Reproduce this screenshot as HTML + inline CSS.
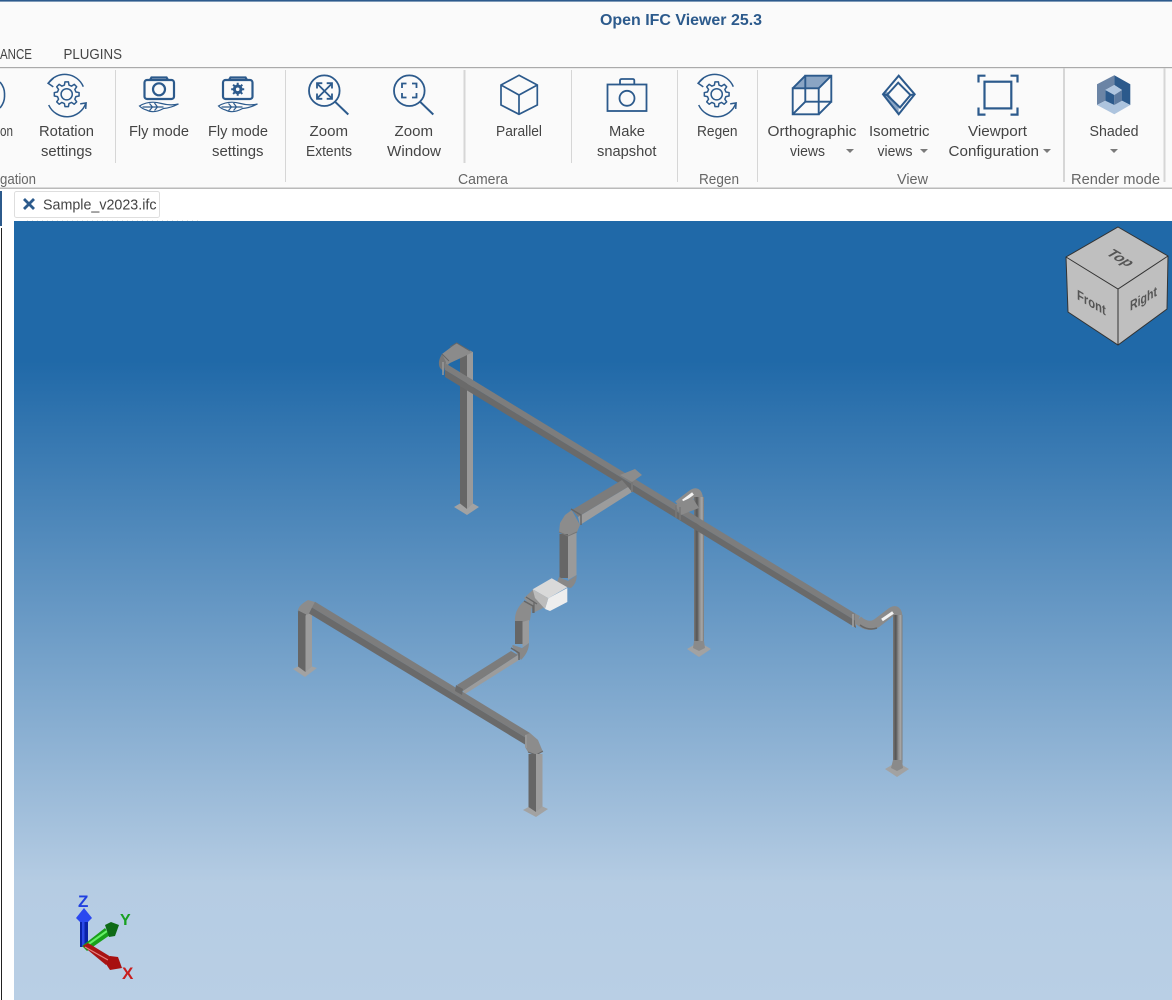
<!DOCTYPE html>
<html><head><meta charset="utf-8"><title>Open IFC Viewer 25.3</title>
<style>
html,body{margin:0;padding:0;width:1172px;height:1000px;overflow:hidden;background:#fff}
svg{display:block;font-family:"Liberation Sans",sans-serif}
.t{font-size:15px;fill:#444}
.g{font-size:15px;fill:#666}
.i{fill:none;stroke:#2c5a8c}
</style></head><body>
<svg width="1172" height="1000" viewBox="0 0 1172 1000" xmlns="http://www.w3.org/2000/svg">
<defs>
<linearGradient id="bg" x1="0" y1="0" x2="0" y2="1">
<stop offset="0" stop-color="#2069a8"/><stop offset=".18" stop-color="#2069a8"/><stop offset=".85" stop-color="#b5cce3"/><stop offset="1" stop-color="#b9cfe5"/>
</linearGradient>
<linearGradient id="pipeV" x1="0" y1="0" x2="1" y2="0">
<stop offset="0" stop-color="#777"/><stop offset=".3" stop-color="#555"/><stop offset=".55" stop-color="#8a8a8a"/><stop offset=".8" stop-color="#a8a8a8"/><stop offset="1" stop-color="#777"/>
</linearGradient>
<path id="gear" fill="none" stroke="#2c5a8c" stroke-width="1.5" stroke-linejoin="round" d="M9.22,-2.3L12.38,-1.74L12.38,1.74L9.22,2.3L8.14,4.89L9.98,7.52L7.52,9.98L4.89,8.14L2.3,9.22L1.74,12.38L-1.74,12.38L-2.3,9.22L-4.89,8.14L-7.52,9.98L-9.98,7.52L-8.14,4.89L-9.22,2.3L-12.38,1.74L-12.38,-1.74L-9.22,-2.3L-8.14,-4.89L-9.98,-7.52L-7.52,-9.98L-4.89,-8.14L-2.3,-9.22L-1.74,-12.38L1.74,-12.38L2.3,-9.22L4.89,-8.14L7.52,-9.98L9.98,-7.52L8.14,-4.89Z"/>
<g id="rot" fill="none" stroke="#2c5a8c" stroke-width="1.5">
<use href="#gear"/><circle r="5.6"/>
<path d="M-18.5,-11 A20,20 0 0 1 16.6,-7.6"/>
<path d="M-13.2,-16.2 L-18.6,-11 L-13.4,-7.4"/>
<path d="M-18,10.7 A20,20 0 0 0 19.2,8.7"/>
<path d="M13.5,9.6 L19.4,8.6 L19,14.6"/>
</g>
<g id="feather" fill="none" stroke="#2c5a8c" stroke-width="1.2">
<path d="M0,2.5 Q10,-3.5 22,0 Q31,2.5 39,0.5 Q31,4.5 24,5 Q14,10.5 7,6.5 Q3,5.5 0,2.5Z"/>
<path d="M3,3.5 L24,3.5 M10,0 L13,3.5 M15,-0.5 L18,3.5 M10,7 L13,3.5 M15,7 L18,3.5"/>
</g>
<g id="tri"><path d="M-4,-2 L4,-2 L0,2Z" fill="#7a7a7a"/></g>
</defs>

<rect width="1172" height="1000" fill="#fff"/>
<rect width="1172" height="188" fill="#fafafa"/>
<rect width="1172" height="1.6" fill="#2c5a8c"/>
<rect y="67" width="1172" height="1.2" fill="#aaa"/>
<rect y="187.6" width="1172" height="1.2" fill="#aaa"/>

<text x="600" y="25" font-size="16" font-weight="bold" fill="#2c5a8c" textLength="162" lengthAdjust="spacingAndGlyphs">Open IFC Viewer 25.3</text>
<text x="0" y="59" class="t" textLength="32" lengthAdjust="spacingAndGlyphs">ANCE</text>
<text x="63.500" y="59" class="t" textLength="58.500" lengthAdjust="spacingAndGlyphs">PLUGINS</text>

<!-- separators -->
<g fill="#d6d6d6">
<rect x="115" y="70" width="1" height="93"/>
<rect x="285" y="70" width="1" height="112"/>
<rect x="463.500" y="70" width="2" height="93"/>
<rect x="571" y="70" width="1" height="93"/>
<rect x="677" y="70" width="1" height="112"/>
<rect x="757" y="70" width="1" height="112"/>
<rect x="1063" y="68" width="2" height="114"/>
<rect x="1163.500" y="68" width="2" height="114"/>
</g>

<!-- labels -->
<g class="t">
<text class="t" x="0" y="136" textLength="13" lengthAdjust="spacingAndGlyphs">on</text>
<text class="t" x="39" y="136" textLength="55" lengthAdjust="spacingAndGlyphs">Rotation</text>
<text class="t" x="41" y="156" textLength="51" lengthAdjust="spacingAndGlyphs">settings</text>
<text class="t" x="129" y="136" textLength="60" lengthAdjust="spacingAndGlyphs">Fly mode</text>
<text class="t" x="208" y="136" textLength="60" lengthAdjust="spacingAndGlyphs">Fly mode</text>
<text class="t" x="212" y="156" textLength="51.500" lengthAdjust="spacingAndGlyphs">settings</text>
<text class="t" x="309.500" y="136" textLength="38.500" lengthAdjust="spacingAndGlyphs">Zoom</text>
<text class="t" x="306" y="156" textLength="46" lengthAdjust="spacingAndGlyphs">Extents</text>
<text class="t" x="394.500" y="136" textLength="38.500" lengthAdjust="spacingAndGlyphs">Zoom</text>
<text class="t" x="387" y="156" textLength="54" lengthAdjust="spacingAndGlyphs">Window</text>
<text class="t" x="496" y="136" textLength="46" lengthAdjust="spacingAndGlyphs">Parallel</text>
<text class="t" x="609" y="136" textLength="36" lengthAdjust="spacingAndGlyphs">Make</text>
<text class="t" x="597" y="156" textLength="59.500" lengthAdjust="spacingAndGlyphs">snapshot</text>
<text class="t" x="697" y="136" textLength="40.500" lengthAdjust="spacingAndGlyphs">Regen</text>
<text class="t" x="767.500" y="136" textLength="89" lengthAdjust="spacingAndGlyphs">Orthographic</text>
<text class="t" x="790" y="156" textLength="35" lengthAdjust="spacingAndGlyphs">views</text>
<text class="t" x="869" y="136" textLength="60.500" lengthAdjust="spacingAndGlyphs">Isometric</text>
<text class="t" x="877.500" y="156" textLength="35" lengthAdjust="spacingAndGlyphs">views</text>
<text class="t" x="968" y="136" textLength="59" lengthAdjust="spacingAndGlyphs">Viewport</text>
<text class="t" x="948.500" y="156" textLength="90.500" lengthAdjust="spacingAndGlyphs">Configuration</text>
<text class="t" x="1089.500" y="136" textLength="49" lengthAdjust="spacingAndGlyphs">Shaded</text>
<text class="g" x="0" y="184" textLength="36" lengthAdjust="spacingAndGlyphs">gation</text>
<text class="g" x="458" y="184" textLength="50" lengthAdjust="spacingAndGlyphs">Camera</text>
<text class="g" x="699" y="184" textLength="40" lengthAdjust="spacingAndGlyphs">Regen</text>
<text class="g" x="897" y="184" textLength="31" lengthAdjust="spacingAndGlyphs">View</text>
<text class="g" x="1071" y="184" textLength="89" lengthAdjust="spacingAndGlyphs">Render mode</text>
</g>
<use href="#tri" x="850" y="151"/><use href="#tri" x="924" y="151"/><use href="#tri" x="1047" y="151"/><use href="#tri" x="1114" y="151"/>

<!-- icons -->
<path class="i" stroke-width="1.6" d="M0,82 Q5,88 4.500,95 Q5,102 0,108"/>
<use href="#rot" x="66.700" y="94.300"/>
<use href="#rot" x="716.700" y="94.300"/>

<!-- fly mode -->
<g class="i" stroke-width="2.200">
<rect x="144.500" y="80" width="29.500" height="19" rx="2.500"/>
<path d="M150,80 L151.500,77.500 L166.500,77.500 L168,80"/>
<circle cx="159" cy="89.300" r="6"/>
<rect x="223" y="80" width="29.500" height="19" rx="2.500"/>
<path d="M229,80 L230.500,77.500 L245.500,77.500 L247,80"/>
</g>
<use href="#feather" x="139.500" y="103.500"/>
<use href="#feather" x="218.500" y="103.500"/>
<g transform="translate(237.700,89.300)">
<circle r="4.800" fill="#2c5a8c"/>
<path d="M0,-6.500V6.500M-6.500,0H6.500M-4.600,-4.600L4.600,4.600M-4.600,4.600L4.600,-4.600" stroke="#2c5a8c" stroke-width="2"/>
<circle r="1.800" fill="#fafafa"/>
</g>

<!-- zoom extents -->
<g class="i" stroke-width="1.800">
<circle cx="324.300" cy="90.700" r="15.300"/>
<path d="M335,101.700 L348.300,114.500" stroke-width="2"/>
<path d="M317.500,84 L331.500,98 M331.500,84 L317.500,98"/>
<path d="M317,88.500V83.200H322.300M332,88.500V83.200H326.700M317,93.500V98.800H322.300M332,93.500V98.800H326.700"/>
</g>
<!-- zoom window -->
<g class="i" stroke-width="1.800">
<circle cx="409.300" cy="90.700" r="15.300"/>
<path d="M420,101.700 L433.300,114.500" stroke-width="2"/>
<path d="M402,88V83.500H406.500M412,83.500H416.500V88M416.500,93V97.500H412M406.500,97.500H402V93"/>
</g>
<!-- parallel -->
<path class="i" stroke-width="1.700" d="M519,75.300 L537.300,85 V105 L519,114.300 L501,105 V85Z M501,85 L519,95 L537.300,85 M519,95V114.300"/>
<!-- snapshot -->
<g class="i" stroke-width="1.800">
<rect x="607.500" y="84.500" width="39" height="26.500"/>
<path d="M620,84.500V80.500Q620,79 622,79H632.500Q634.300,79 634.300,80.500V84.500"/>
<circle cx="627" cy="98.300" r="7.500"/>
</g>
<!-- ortho -->
<path d="M792.700,88.300 L805.300,75.700 H831.300 L818.700,88.300Z" fill="#8aa5c4"/>
<g class="i" stroke-width="1.900">
<rect x="792.700" y="88.300" width="26" height="26"/>
<rect x="805.300" y="75.700" width="26" height="26"/>
<path d="M792.700,88.300 L805.300,75.700 M818.700,88.300 L831.300,75.700 M792.700,114.300 L805.300,101.700 M818.700,114.300 L831.300,101.700"/>
</g>
<!-- iso -->
<path d="M883,94.300 L898.700,114.300 V107.500 L887,91.500Z" fill="#8aa5c4"/>
<g class="i" stroke-width="2">
<path d="M898.700,75.700 L914.700,94.300 L898.700,114.300 L883,94.300Z"/>
<path d="M898.200,82.700 L910.500,95 L900,107.500 L887,95Z"/>
<path d="M883,94.300 L887,95 M914.700,94.300 L910.500,95"/>
</g>
<!-- viewport -->
<g class="i" stroke-width="2.200">
<rect x="984.500" y="81.700" width="26.800" height="26.700"/>
<path d="M978.500,82.500V75.700H985.500M1010.500,75.700H1017.500V82.500M1017.500,107.500V114.600H1010.500M985.500,114.600H978.500V107.500"/>
</g>
<!-- shaded -->
<path d="M1097,84.300 L1114.300,75.300 V85 L1105.300,90 V100.700 L1097,105Z" fill="#6b84a5"/>
<path d="M1114.300,75.300 L1130.300,84.300 V105 L1122,100.700 V90 L1114.300,85Z" fill="#2c5a8c"/>
<path d="M1097,105 L1105.300,100.700 L1114.300,105 L1122,100.700 L1130.300,105 L1114.300,114.300Z" fill="#adc4de"/>
<path d="M1105.300,90 L1114.300,85 L1122,90 L1114.300,95Z" fill="#b0c6e0"/>
<path d="M1105.300,90 L1114.300,95 V105 L1105.300,100.700Z" fill="#2c5a8c"/>
<path d="M1114.300,95 L1122,90 V100.700 L1114.300,105Z" fill="#5c7aa0"/>

<!-- tab strip -->
<rect x="0" y="191" width="2" height="35" fill="#2c5a8c"/>
<rect x="1" y="228" width="1" height="772" fill="#222"/>
<rect x="14.500" y="191.500" width="145" height="26" rx="2" fill="#fff" stroke="#dedede"/>
<path d="M24,199 L34,209 M34,199 L24,209" stroke="#2c5a8c" stroke-width="2.800" fill="none"/>
<text class="t" x="43" y="209.500" textLength="113.500" lengthAdjust="spacingAndGlyphs">Sample_v2023.ifc</text>
<path d="M27,220.500 H200" stroke="#e2e2e2" stroke-dasharray="1 4"/>

<!-- viewport -->
<rect x="14" y="221" width="1158" height="779" fill="url(#bg)"/>

<!-- post 1 -->
<path d="M460,352 H467 V510 L460,505Z" fill="#666"/>
<path d="M467,352 H473 V505 L467,510Z" fill="#9a9a9a"/>
<path d="M454,507 L460,503.500 L467,509 L473,503.500 L479,507 L467,515Z" fill="#a2a2a2"/>

<!-- post right 1 -->
<path d="M678,505 L691,495 Q698,489 698.500,499" fill="none" stroke="#8c8c8c" stroke-width="9"/>
<path d="M683,501 L693,493.500" stroke="#f4f4f4" stroke-width="3" fill="none"/>
<rect x="694" y="497" width="10" height="146" fill="url(#pipeV)"/>
<path d="M687,649 L699,642 L711,649 L699,657Z" fill="#a2a2a2"/>
<path d="M693,648 L699,651 L705,648 L704,641 H694Z" fill="#8a8a8a"/>

<!-- post right 2 -->
<path d="M858,620 Q868,629 877,623 L890,613 Q897,607 898,616" fill="none" stroke="#8a8a8a" stroke-width="9"/>
<path d="M860,625 Q868,631 877,628" fill="none" stroke="#666" stroke-width="1.500"/>
<path d="M882,620 L893,612.500" stroke="#f4f4f4" stroke-width="3" fill="none"/>
<rect x="893" y="615" width="9.500" height="148" fill="url(#pipeV)"/>
<path d="M885,769 L897,762 L909,769 L897,777Z" fill="#a2a2a2"/>
<path d="M891,768 L897,771 L903,768 L902,760 H893Z" fill="#8a8a8a"/>

<!-- top left elbow -->
<path d="M442,354 L456.700,343 L473,352 L463,357 L450,363 L443,369Z" fill="#8b8b8b"/>
<path d="M442,354 Q437,362 440,368 L444,372 L446,362Z" fill="#777"/>
<path d="M450,347 L456.700,343 L470,351" stroke="#666" fill="none"/>
<path d="M442,354 L449,361" stroke="#666" fill="none"/>

<!-- main duct 1 -->
<path d="M445,363 L856,614 V621 L445,370Z" fill="#7d7d7d"/>
<path d="M445,370 L856,621 V628 L445,377Z" fill="#6a6a6a"/>
<path d="M443,362 V375" stroke="#999" stroke-width="1.500"/>
<path d="M855,613.500 L860,616 L855,627Z" fill="#8a8a8a"/>
<path d="M853,614 V627" stroke="#a5a5a5" stroke-width="1.500"/>
<!-- flange near post1 -->
<path d="M675,505 L692,497 L699,508 L681,515Z" fill="#8a8a8a"/>
<path d="M676,505 V518 M680,507 V520" stroke="#777" stroke-width="1.500"/>

<!-- tee + branch -->
<path d="M572,510 L622,480 L628,487 L578,517Z" fill="#7c7c7c"/>
<path d="M578,517 L628,487 L632,492 L580,525Z" fill="#9c9c9c"/>
<path d="M620,475 L635,469 L642,475 L632,482Z" fill="#8c8c8c"/>
<path d="M632,482 V492" stroke="#777" stroke-width="2"/>
<!-- elbow 1 + vertical duct -->
<path d="M571.700,510 L565,515 L560,523 L559,532 L568,535.700 L577,532 L580,525Z" fill="#8c8c8c"/>
<path d="M571,509 L581,515 V525" stroke="#666" stroke-width="1.500" fill="none"/>
<rect x="559.500" y="534" width="8.500" height="44" fill="#666"/>
<path d="M568,535 L576.500,532 V575 L568,580Z" fill="#9a9a9a"/>
<path d="M559,532 L568,536 L577,532" stroke="#777" fill="none"/>
<path d="M559,577 L568,581 L576.700,575 Q577,583 571,588 L556,585Z" fill="#888"/>

<!-- filter box -->
<path d="M532.700,590 L524,598 L535,612 L545,607 V596Z" fill="#8f8f8f"/>
<path d="M526,597 L534,602 V613 M529,599 L537,604" stroke="#666" stroke-width="1.200" fill="none"/>
<path d="M532.700,589.300 L551.700,578.300 L567.300,587.300 L548.300,598.300Z" fill="#d9d9d9"/>
<path d="M548.300,598.300 L567.300,588 V602 L550,611 L545,609Z" fill="#eeeeee"/>
<path d="M532.700,589.300 L548.300,598.300 L545,609 L535,598Z" fill="#bcbcbc"/>

<!-- elbow 2 + vertical -->
<path d="M524,601 L532,606 L530,620 L528,622 L515,622 Q514,610 524,601Z" fill="#8c8c8c"/>
<path d="M524,601 L533,606 V613" stroke="#666" stroke-width="1.500" fill="none"/>
<rect x="515" y="621" width="7.500" height="23" fill="#666"/>
<path d="M522.500,622 L529,620 V643 L522.500,647Z" fill="#9a9a9a"/>
<path d="M513,645 L522,648 L529,643 Q529,652 521,660 L512,646Z" fill="#888"/>

<!-- branch 2 -->
<path d="M457,685 L511,651 L518,655 L463,691Z" fill="#7c7c7c"/>
<path d="M463,691 L518,655 L519,660 L465,694Z" fill="#9c9c9c"/>
<path d="M511,648 L519,653 V660" stroke="#666" stroke-width="1.500" fill="none"/>

<!-- main duct 2 -->
<path d="M298,612 H305.500 V673 L298,669Z" fill="#666"/>
<path d="M305.500,612 H312 V669 L305.500,673Z" fill="#9c9c9c"/>
<path d="M293,669 L298,666.500 L305.500,672 L312,666.500 L317,668 L305,677Z" fill="#a2a2a2"/>
<path d="M298,610 Q299,605 308,600 L315,602 L309,614 L305,615Z" fill="#8c8c8c"/>
<path d="M298,611 L306,615" stroke="#666"/>
<path d="M315,601.700 L530,733 L528,739 L312,607.500Z" fill="#7d7d7d"/>
<path d="M312,607.500 L528,739 L525,744.500 L309,613.500Z" fill="#6a6a6a"/>
<path d="M456,685 L463,689 L462,695 L455,691Z" fill="#6a6a6a"/>

<!-- elbow bottom right -->
<path d="M525,735 L530,733 L538,740 L543,752 L537,755 L528,752 L525,747Z" fill="#8c8c8c"/>
<path d="M526,735 V748" stroke="#999" stroke-width="1.500"/>
<path d="M528,752 L536,755 L543,751" stroke="#666" fill="none"/>
<path d="M528.500,754 H536 V813 L528.500,808Z" fill="#666"/>
<path d="M536,754 H542.500 V808 L536,813Z" fill="#9c9c9c"/>
<path d="M523,810 L528.500,807 L536,812 L542.500,806.500 L548,809 L536,817Z" fill="#a2a2a2"/>

<!-- nav cube -->
<path d="M1118,227 L1168,256 L1167,309 L1118,345 L1068,312 L1066,257Z" fill="#bfbfbf" stroke="#333" stroke-width="1"/>
<path d="M1066,257 L1118,289 L1168,256 M1118,289 V345" fill="none" stroke="#333" stroke-width="1"/>
<text transform="matrix(.87 .5 -.87 .5 1105 254)" font-size="15" font-weight="bold" fill="#555" textLength="26" lengthAdjust="spacingAndGlyphs">Top</text>
<text transform="matrix(.87 .5 0 1 1077 299)" font-size="14" font-weight="bold" fill="#555" textLength="33" lengthAdjust="spacingAndGlyphs">Front</text>
<text transform="matrix(.87 -.5 0 1 1130 311)" font-size="14" font-weight="bold" fill="#555" textLength="31" lengthAdjust="spacingAndGlyphs">Right</text>

<!-- axes -->
<rect x="80" y="920" width="8" height="27" fill="#0a22a8"/>
<rect x="82" y="920" width="2.500" height="27" fill="#2a48e6"/>
<path d="M84,908 L92,918 L88,922 H80 L76,918Z" fill="#2a48f0"/>
<path d="M82,946 L105,928 L110,935 L87,951Z" fill="#19a019"/>
<path d="M86,946 L107,931" stroke="#66f066" stroke-width="2"/>
<path d="M105,925 L111,922 L119,925 L115,936 L109,937Z" fill="#0e6a16"/>
<path d="M83,946 L88,943 L111,957 L106,965Z" fill="#a81414"/>
<path d="M85,947 L108,960" stroke="#e88080" stroke-width="1.200"/>
<path d="M110,956 L118,957 L122,968 L110,970 L106,964Z" fill="#a81010"/>
<text x="78" y="907" font-size="17" font-weight="bold" fill="#2040e0">Z</text>
<text x="120" y="925" font-size="16" font-weight="bold" fill="#18a020">Y</text>
<text x="122" y="979" font-size="17" font-weight="bold" fill="#c81e1e">X</text>
</svg>
</body></html>
